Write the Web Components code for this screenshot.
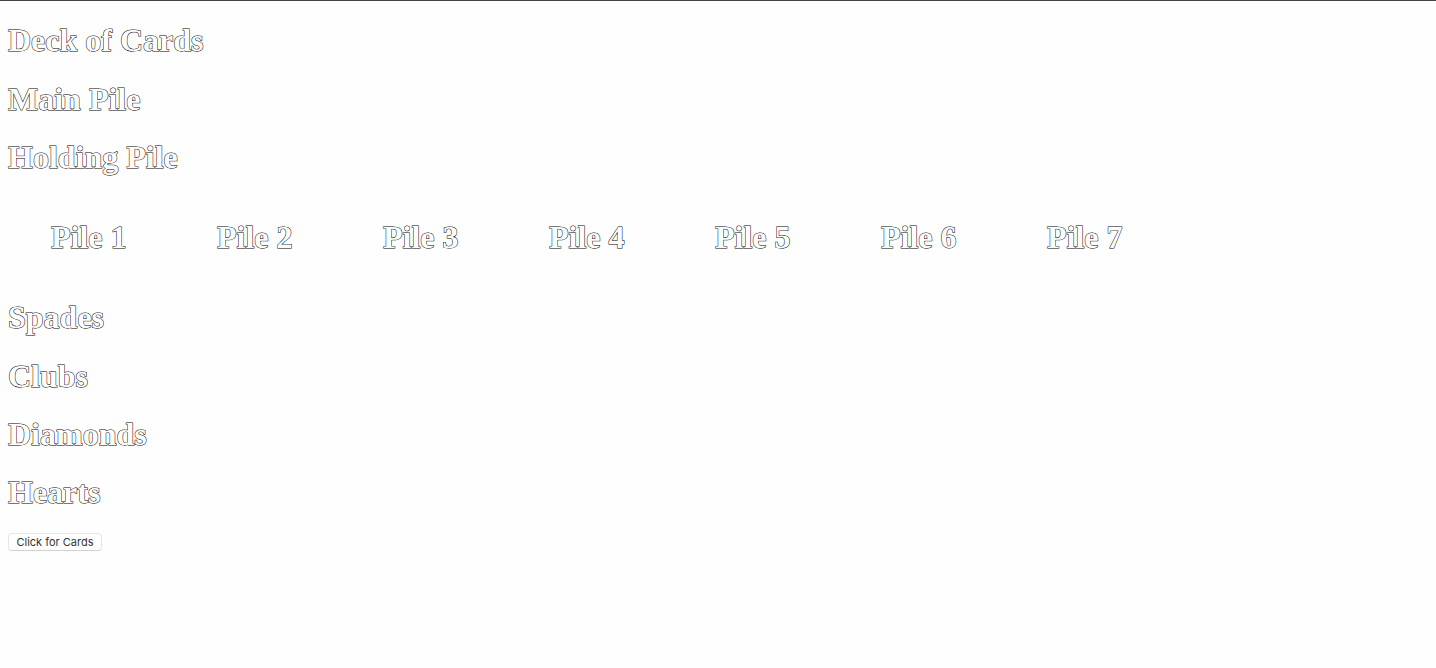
<!DOCTYPE html>
<html lang="en">
<head>
<meta charset="utf-8">
<title>Deck of Cards</title>
<style>
  body {
    margin: 0;
    background: #fefefe;
    font-family: "Liberation Serif", "Times New Roman", serif;
  }
</style>
</head>
<body>
<card-game></card-game>
<script>
  class PileTitle extends HTMLElement {
    constructor() {
      super();
      this.attachShadow({ mode: "open" }).innerHTML = `
        <style>
          :host { display: block; }
          h1 {
            margin-block: 0.67em;
            font-size: 32px;
            line-height: 37px;
            font-weight: bold;
            white-space: nowrap;
            color: #fefefe;
            -webkit-text-stroke: 1px #000;
            paint-order: stroke fill;
          }
        </style>
        <h1><slot></slot></h1>`;
    }
  }
  customElements.define("pile-title", PileTitle);

  class PileRow extends HTMLElement {
    constructor() {
      super();
      this.attachShadow({ mode: "open" }).innerHTML = `
        <style>
          :host {
            display: grid;
            grid-template-columns: repeat(7, 158px);
            column-gap: 8px;
            padding-left: 43px;
          }
        </style>
        <slot></slot>`;
    }
  }
  customElements.define("pile-row", PileRow);

  class DealButton extends HTMLElement {
    constructor() {
      super();
      this.attachShadow({ mode: "open" }).innerHTML = `
        <style>
          :host { display: flex; }
          button {
            min-width: 94px;
            height: 18px;
            padding: 0 7px;
            border: 1px solid #e6e6e6;
            border-bottom-color: #d2d2d2;
            border-radius: 4px;
            background: #fff;
            color: #333;
            font: 11px/16px Inter, "Liberation Sans", sans-serif;
          }
        </style>
        <button type="button"><slot></slot></button>`;
    }
  }
  customElements.define("deal-button", DealButton);

  class CardGame extends HTMLElement {
    constructor() {
      super();
      this.attachShadow({ mode: "open" }).innerHTML = `
        <style>
          :host { display: block; border-top: 1px solid #444; }
          main { padding: 0 8px; }
        </style>
        <main>
          <pile-title>Deck of Cards</pile-title>
          <pile-title>Main Pile</pile-title>
          <pile-title>Holding Pile</pile-title>
          <pile-row>
            <pile-title>Pile 1</pile-title>
            <pile-title>Pile 2</pile-title>
            <pile-title>Pile 3</pile-title>
            <pile-title>Pile 4</pile-title>
            <pile-title>Pile 5</pile-title>
            <pile-title>Pile 6</pile-title>
            <pile-title>Pile 7</pile-title>
          </pile-row>
          <pile-title>Spades</pile-title>
          <pile-title>Clubs</pile-title>
          <pile-title>Diamonds</pile-title>
          <pile-title>Hearts</pile-title>
          <deal-button>Click for Cards</deal-button>
        </main>`;
    }
  }
  customElements.define("card-game", CardGame);
</script>
</body>
</html>
